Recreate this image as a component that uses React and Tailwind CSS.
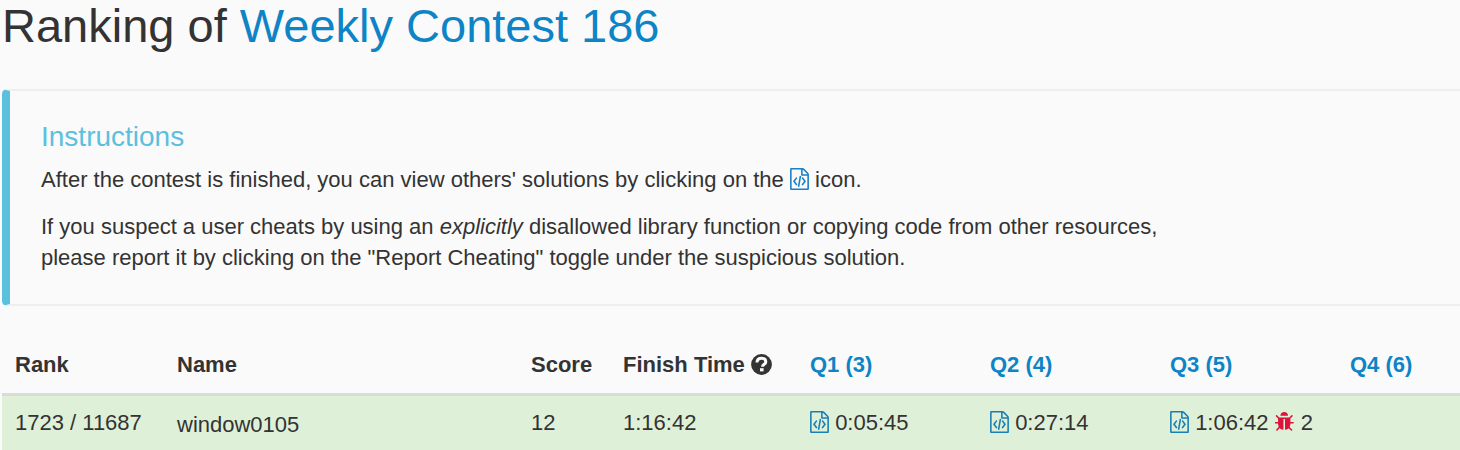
function FileCodeIcon() {
  return (
    <svg viewBox="128 0 1536 1792" fill="currentColor" aria-hidden="true" className="inline-block h-[22px] w-[19px] align-[-3px]">
      <path d="M1596 380q28 28 48 76t20 88v1152q0 40-28 68t-68 28h-1344q-40 0-68-28t-28-68v-1600q0-40 28-68t68-28h896q40 0 88 20t76 48zm-444-244v376h376q-10-29-22-41l-313-313q-12-12-41-22zm384 1528v-1024h-416q-40 0-68-28t-28-68v-416h-768v1536h1280zm-928-896q8-11 21-12.500t24 6.500l51 38q11 8 12.500 21t-6.500 24l-182 243 182 243q8 11 6.500 24t-12.500 21l-51 38q-11 8-24 6.500t-21-12.500l-226-301q-14-19 0-38zm802 301q14 19 0 38l-226 301q-8 11-21 12.500t-24-6.500l-51-38q-11-8-12.500-21t6.500-24l182-243-182-243q-8-11-6.500-24t12.500-21l51-38q11-8 24-6.500t21 12.500zm-620 461q-13-2-20.500-13t-5.500-24l138-831q2-13 13-20.500t24-5.500l63 10q13 2 20.500 13t5.500 24l-138 831q-2 13-13 20.500t-24 5.500z" />
    </svg>
  );
}

function BugIcon() {
  return (
    <svg viewBox="64 0 1664 1792" fill="currentColor" aria-hidden="true" className="inline-block h-[22px] w-5 align-[-3px] text-[#dc143c]">
      <path d="M1632 960q0 26-19 45t-45 19h-224q0 171-67 290l208 209q19 19 19 45t-19 45q-18 19-45 19t-45-19l-198-197q-5 5-15 13t-42 28.500-65 36.500-82 29-97 13v-896h-128v896q-51 0-101.500-13.500t-87-33-66-39-43.500-32.500l-15-14-183 207q-20 21-48 21-24 0-43-16-19-18-20.500-44.500t15.500-46.500l202-227q-58-114-58-274h-224q-26 0-45-19t-19-45 19-45 45-19h224v-294l-173-173q-19-19-19-45t19-45 45-19 45 19l173 173h844l173-173q19-19 45-19t45 19 19 45-19 45l-173 173v294h224q26 0 45 19t19 45zm-480-576h-640q0-133 93.500-226.500t226.500-93.500 226.500 93.500 93.500 226.500z" />
    </svg>
  );
}

function QuestionIcon() {
  return (
    <svg viewBox="0 0 21 21" aria-hidden="true" className="inline-block h-[21px] w-[21px] align-[-3px]">
      <circle cx="10.5" cy="10.500" r="10.400" fill="currentColor" />
      <path d="M6 8.600C6 5.600 7.600 4.300 10.600 4.300S14.800 5.800 14.800 7.900c0 2.500-3.300 2.300-3.300 4.900" fill="none" stroke="#fafafa" strokeWidth="3" />
      <rect x="9" y="14.200" width="3.600" height="3.200" fill="#fafafa" />
    </svg>
  );
}

const questions = [
  { label: "Q1 (3)", time: "0:05:45" },
  { label: "Q2 (4)", time: "0:27:14" },
  { label: "Q3 (5)", time: "1:06:42", bugs: 2 },
  { label: "Q4 (6)" },
];

export default function App() {
  return (
    <main className="min-h-screen overflow-hidden bg-[#fafafa] pl-0.5 font-['Liberation_Sans',Arial,sans-serif] text-[22px] leading-[31px] text-[#333]">
      <h1 className="text-[47px] leading-[52px]">
        Ranking of <a href="#contest" className="text-[#0d84c6]">Weekly Contest 186</a>
      </h1>

      <section className="mt-[37px] rounded-l-[5px] border-y-2 border-l-8 border-y-[#eee] border-l-[#5bc0de] pt-[30px] pb-[31px] pl-[31px]">
        <h2 className="text-[28px] leading-[31px] text-[#5bc0de]">Instructions</h2>
        <p className="mt-3">
          After the contest is finished, you can view others' solutions by clicking on the{" "}
          <span className="text-[#1a7fc4]"><FileCodeIcon /></span> icon.
        </p>
        <p className="mt-4">
          If you suspect a user cheats by using an <em>explicitly</em> disallowed library function or copying code from other resources,
          <br />
          please report it by clicking on the "Report Cheating" toggle under the suspicious solution.
        </p>
      </section>

      <table className="mt-[30px] w-full table-fixed text-left">
        <colgroup>
          <col className="w-[162px]" />
          <col className="w-[354px]" />
          <col className="w-[92px]" />
          <col className="w-[187px]" />
          <col className="w-[180px]" />
          <col className="w-[180px]" />
          <col className="w-[180px]" />
          <col />
        </colgroup>
        <thead>
          <tr className="border-b-3 border-[#dadcd8] whitespace-nowrap">
            <th className="px-[13px] py-[13px]">Rank</th>
            <th className="px-[13px] py-[13px]">Name</th>
            <th className="px-[13px] py-[13px]">Score</th>
            <th className="px-[13px] py-[13px]">
              Finish Time{" "}
              <button type="button" aria-label="About finish time" className="inline"><QuestionIcon /></button>
            </th>
            {questions.map((q) => (
              <th key={q.label} className="px-[13px] py-[13px]">
                <a href="#question" className="text-[#0d84c6]">{q.label}</a>
              </th>
            ))}
          </tr>
        </thead>
        <tbody>
          <tr className="bg-[#dff0d8] whitespace-nowrap">
            <td className="px-[13px] pt-[11px] pb-[13px]">1723 / 11687</td>
            <td className="px-[13px] pt-[13px] pb-[11px]">window0105</td>
            <td className="px-[13px] pt-[11px] pb-[13px]">12</td>
            <td className="px-[13px] pt-[11px] pb-[13px]">1:16:42</td>
            {questions.map((q) => (
              <td key={q.label} className="px-[13px] pt-[11px] pb-[13px]">
                {q.time && (
                  <>
                    <a href="#solution" aria-label="View solution" className="text-[#1a7fb4]"><FileCodeIcon /></a> {q.time}
                  </>
                )}
                {q.bugs && (
                  <> <BugIcon /> {q.bugs}</>
                )}
              </td>
            ))}
          </tr>
        </tbody>
      </table>
    </main>
  );
}
